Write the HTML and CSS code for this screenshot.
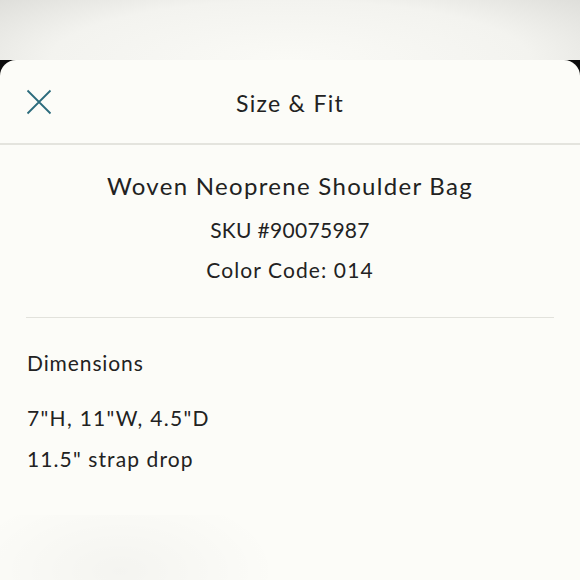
FILE: index.html
```html
<!DOCTYPE html>
<html>
<head>
<meta charset="utf-8">
<link rel="stylesheet" href="styles.css">
</head>
<body>
<div class="backdrop"></div>
<div class="sheet-wrap">
  <div class="sheet">
    <header class="header">
      <button class="close" aria-label="Close">
        <svg width="26" height="26" viewBox="0 0 26 26"><path d="M1.5 1.5 L24.5 24.5 M24.5 1.5 L1.5 24.5" stroke="#2b6b7c" stroke-width="1.8" fill="none"/></svg>
      </button>
      <h1 class="title">Size &amp; Fit</h1>
    </header>
    <section class="product">
      <div class="name">Woven Neoprene Shoulder Bag</div>
      <div class="meta sku">SKU #90075987</div>
      <div class="meta code">Color Code: 014</div>
    </section>
    <section class="dims">
      <div class="dims-title">Dimensions</div>
      <div class="dims-line size">7"H, 11"W, 4.5"D</div>
      <div class="dims-line strap">11.5" strap drop</div>
    </section>
    <div class="shade"></div>
  </div>
</div>
</body>
</html>
```
FILE: styles.css
```css
html, body {
  margin: 0;
  padding: 0;
  height: 580px;
  overflow: hidden;
  font-family: Lato, "Noto Sans", sans-serif;
  color: #222222;
  background: #fcfcf8;
}
.backdrop {
  height: 60px;
  background: radial-gradient(ellipse 75% 180% at 50% 100%, #fafaf6 0%, #f3f3ef 55%, #d6d6d2 100%);
}
.sheet-wrap {
  background: #0c0c0c;
  height: 520px;
}
.sheet {
  position: relative;
  background: #fcfcf8;
  border-radius: 16px 16px 0 0;
  height: 520px;
  overflow: hidden;
}
.header {
  position: relative;
  height: 83px;
  border-bottom: 2px solid #e4e4de;
  display: flex;
  align-items: center;
  justify-content: center;
}
.close {
  position: absolute;
  left: 26px;
  top: 29px;
  padding: 0;
  border: 0;
  background: none;
  width: 26px;
  height: 26px;
}
.close svg { display: block; }
.title {
  margin: 0;
  font-weight: 400;
  font-size: 23px;
  letter-spacing: 1.3px;
  padding-top: 2px;
}
.product {
  margin: 0 26px;
  padding: 26px 0 34px;
  border-bottom: 1px solid #e2e2dc;
  text-align: center;
}
.name {
  font-size: 24px;
  letter-spacing: 1.3px;
  line-height: 30px;
}
.meta {
  font-size: 21px;
  line-height: 26px;
  margin-top: 14px;
}
.sku { letter-spacing: 0.3px; margin-top: 16px; }
.code { letter-spacing: 1.1px; }
.dims {
  padding: 32px 27px 0;
}
.dims-title {
  font-size: 21px;
  letter-spacing: 0.9px;
  line-height: 26px;
  margin-bottom: 29px;
}
.dims-line {
  font-size: 21px;
  line-height: 26px;
  margin-bottom: 15px;
}
.size { letter-spacing: 1.3px; }
.strap { letter-spacing: 1.1px; }
.shade {
  position: absolute;
  left: -40px;
  top: 455px;
  width: 320px;
  height: 140px;
  background: radial-gradient(ellipse at 50% 40%, rgba(0,0,0,0.03), rgba(0,0,0,0) 70%);
}
```
